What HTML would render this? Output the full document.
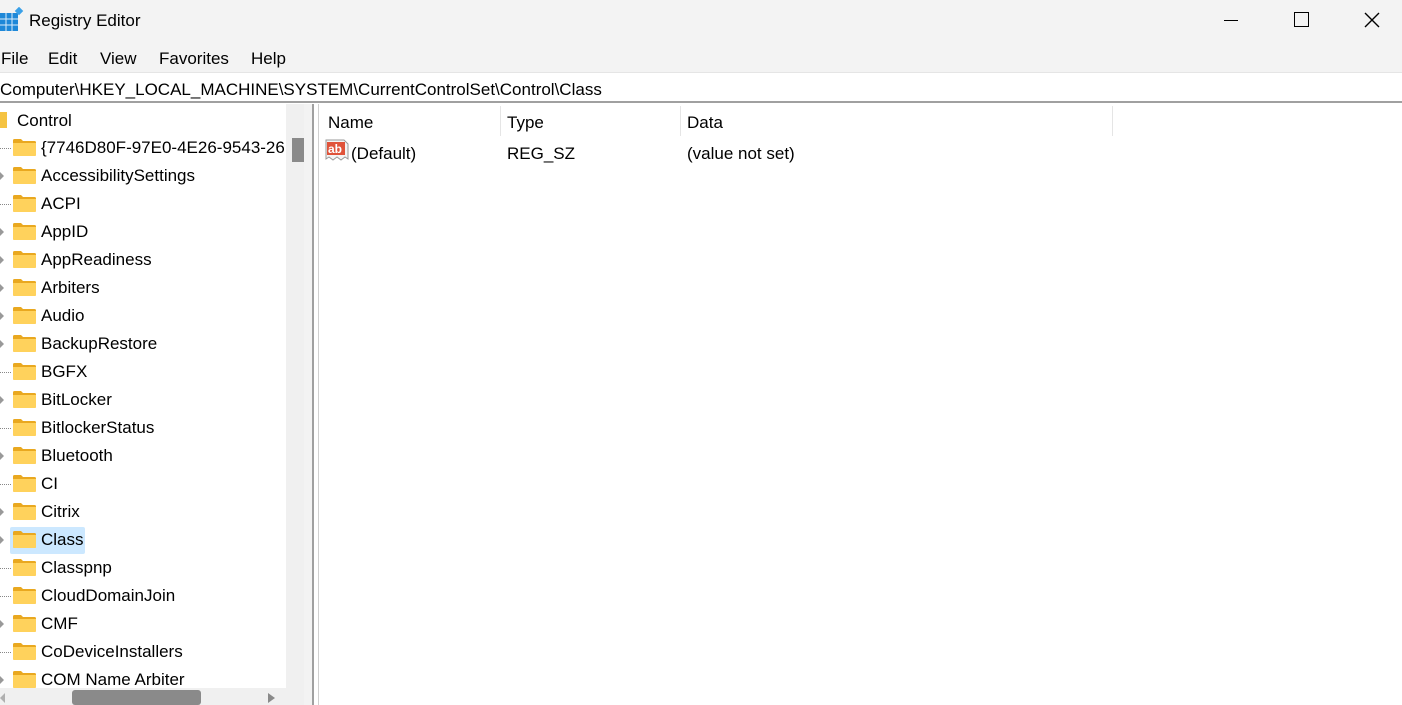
<!DOCTYPE html>
<html><head><meta charset="utf-8"><style>
*{margin:0;padding:0;box-sizing:border-box}
body{width:1402px;height:705px;overflow:hidden;background:#fff;font-family:"Liberation Sans",sans-serif;color:#000;position:relative;font-size:17px}
.abs{position:absolute;white-space:nowrap}
.title{left:0;top:0;width:1402px;height:41px;background:#f3f3f3}
.menu{left:0;top:41px;width:1402px;height:31px;background:#f3f3f3}
.addr{left:0;top:72px;width:1402px;height:31px;background:#fff;border-top:1px solid #e5e5e5;border-bottom:2px solid #a0a0a0}
.folder{position:absolute;left:13px;width:23px;height:17px}
.row{position:absolute;left:0;height:28px;width:286px}
.row span{position:absolute;left:41px;top:5px}
.exp{position:absolute;left:0;top:11px;width:0;height:0;border-left:4px solid #999;border-top:4px solid transparent;border-bottom:4px solid transparent}
</style></head><body>
<div class="abs title"></div>
<svg class="abs" style="left:0;top:7px" width="24" height="26" viewBox="0 0 24 26">
<rect x="0" y="6" width="18" height="18" fill="#1e88d8"/>
<g stroke="#d9ecfa" stroke-width="1"><line x1="6" y1="6" x2="6" y2="24"/><line x1="12" y1="6" x2="12" y2="24"/><line x1="0" y1="12" x2="18" y2="12"/><line x1="0" y1="18" x2="18" y2="18"/></g>
<rect x="16" y="1" width="6" height="6" transform="rotate(45 19 4)" fill="#3aa0e8"/>
</svg>
<div class="abs" style="left:29px;top:11px;font-size:17px">Registry Editor</div>
<div class="abs" style="left:1224px;top:20px;width:14px;height:1px;background:#000"></div>
<div class="abs" style="left:1294px;top:12px;width:15px;height:15px;border:1.5px solid #000"></div>
<svg class="abs" style="left:1364px;top:12px" width="16" height="16"><path d="M1 1L15 15M15 1L1 15" stroke="#000" stroke-width="1.4"/></svg>
<div class="abs menu"></div>
<div class="abs" style="left:1px;top:49px">File</div>
<div class="abs" style="left:48px;top:49px">Edit</div>
<div class="abs" style="left:100px;top:49px">View</div>
<div class="abs" style="left:159px;top:49px">Favorites</div>
<div class="abs" style="left:251px;top:49px">Help</div>
<div class="abs addr"></div>
<div class="abs" style="left:0;top:80px">Computer\HKEY_LOCAL_MACHINE\SYSTEM\CurrentControlSet\Control\Class</div>
<div class="abs" style="left:0;top:104px;width:312px;height:601px;overflow:hidden">
<div style="position:absolute;left:0;top:0;width:286px;height:584px;background:#fff">
<div class="abs" style="left:0;top:8px;width:7px;height:16px;background:#f5c342"></div>
<div class="abs" style="left:17px;top:7px">Control</div>
<div id="rows"></div>
</div>
<div class="abs" style="left:286px;top:0;width:18px;height:584px;background:#f0f0f0"></div>
<div class="abs" style="left:292px;top:34px;width:12px;height:24px;background:#8a8a8a"></div>
<div class="abs" style="left:0;top:584px;width:312px;height:17px;background:#f0f0f0"></div>
<div class="abs" style="left:72px;top:586px;width:129px;height:15px;background:#8a8a8a;border-radius:3px"></div>
<div class="abs" style="left:268px;top:589px;width:0;height:0;border-left:7px solid #8a8a8a;border-top:5px solid transparent;border-bottom:5px solid transparent"></div>
<div class="abs" style="left:0;top:589px;width:0;height:0;border-right:5px solid #b0b0b0;border-top:5px solid transparent;border-bottom:5px solid transparent"></div>
<div class="abs" style="left:304px;top:0;width:8px;height:601px;background:#f3f3f3"></div>
</div>
<div class="abs" style="left:312px;top:104px;width:2px;height:601px;background:#a0a0a0"></div>
<div class="abs" style="left:318px;top:104px;width:1px;height:601px;background:#d0d0d0"></div>
<div class="abs" style="left:328px;top:113px">Name</div>
<div class="abs" style="left:500px;top:106px;width:1px;height:30px;background:#e5e5e5"></div>
<div class="abs" style="left:507px;top:113px">Type</div>
<div class="abs" style="left:680px;top:106px;width:1px;height:30px;background:#e5e5e5"></div>
<div class="abs" style="left:687px;top:113px">Data</div>
<div class="abs" style="left:1112px;top:106px;width:1px;height:30px;background:#e5e5e5"></div>
<svg class="abs" style="left:325px;top:139px" width="24" height="22" viewBox="0 0 24 22">
<path d="M1 1H19L23 5V20L20 18L16 21L12 18L8 21L4 18L1 20Z" fill="#f4f4f4" stroke="#999" stroke-width="1"/>
<rect x="2" y="3" width="18" height="13" fill="#e0533a"/>
<text x="3" y="14" font-family="Liberation Sans" font-weight="bold" font-size="12" fill="#fff">ab</text>
</svg>
<div class="abs" style="left:351px;top:144px">(Default)</div>
<div class="abs" style="left:507px;top:144px">REG_SZ</div>
<div class="abs" style="left:687px;top:144px">(value not set)</div>
<script>
var n=["{7746D80F-97E0-4E26-9543-26B41FC22F79}","AccessibilitySettings","ACPI","AppID","AppReadiness","Arbiters","Audio","BackupRestore","BGFX","BitLocker","BitlockerStatus","Bluetooth","CI","Citrix","Class","Classpnp","CloudDomainJoin","CMF","CoDeviceInstallers","COM Name Arbiter"];
var exp={1:1,3:1,4:1,5:1,6:1,7:1,9:1,11:1,13:1,14:1,17:1,19:1};
var h="";
n.forEach(function(t,i){var y=29+i*28;
h+='<div class="row" style="top:'+y+'px">'+(i==14?'<div style="position:absolute;left:10px;top:2px;width:75px;height:27px;background:#cce8ff;border-radius:2px"></div>':'')+
(exp[i]?'<div class="exp"></div>':'<div style="position:absolute;left:0;top:15px;width:11px;border-top:1px dotted #888"></div>')+
'<svg class="folder" style="top:6px" viewBox="0 0 23 17"><path d="M0 1.5Q0 0 1.5 0H8L10 2H21.5Q23 2 23 3.5V15.5Q23 17 21.5 17H1.5Q0 17 0 15.5Z" fill="#e9a820"/><path d="M0 4H23V15.5Q23 17 21.5 17H1.5Q0 17 0 15.5Z" fill="#ffd25c"/></svg><span>'+t+'</span></div>';});
document.getElementById('rows').innerHTML=h;
</script>
</body></html>
